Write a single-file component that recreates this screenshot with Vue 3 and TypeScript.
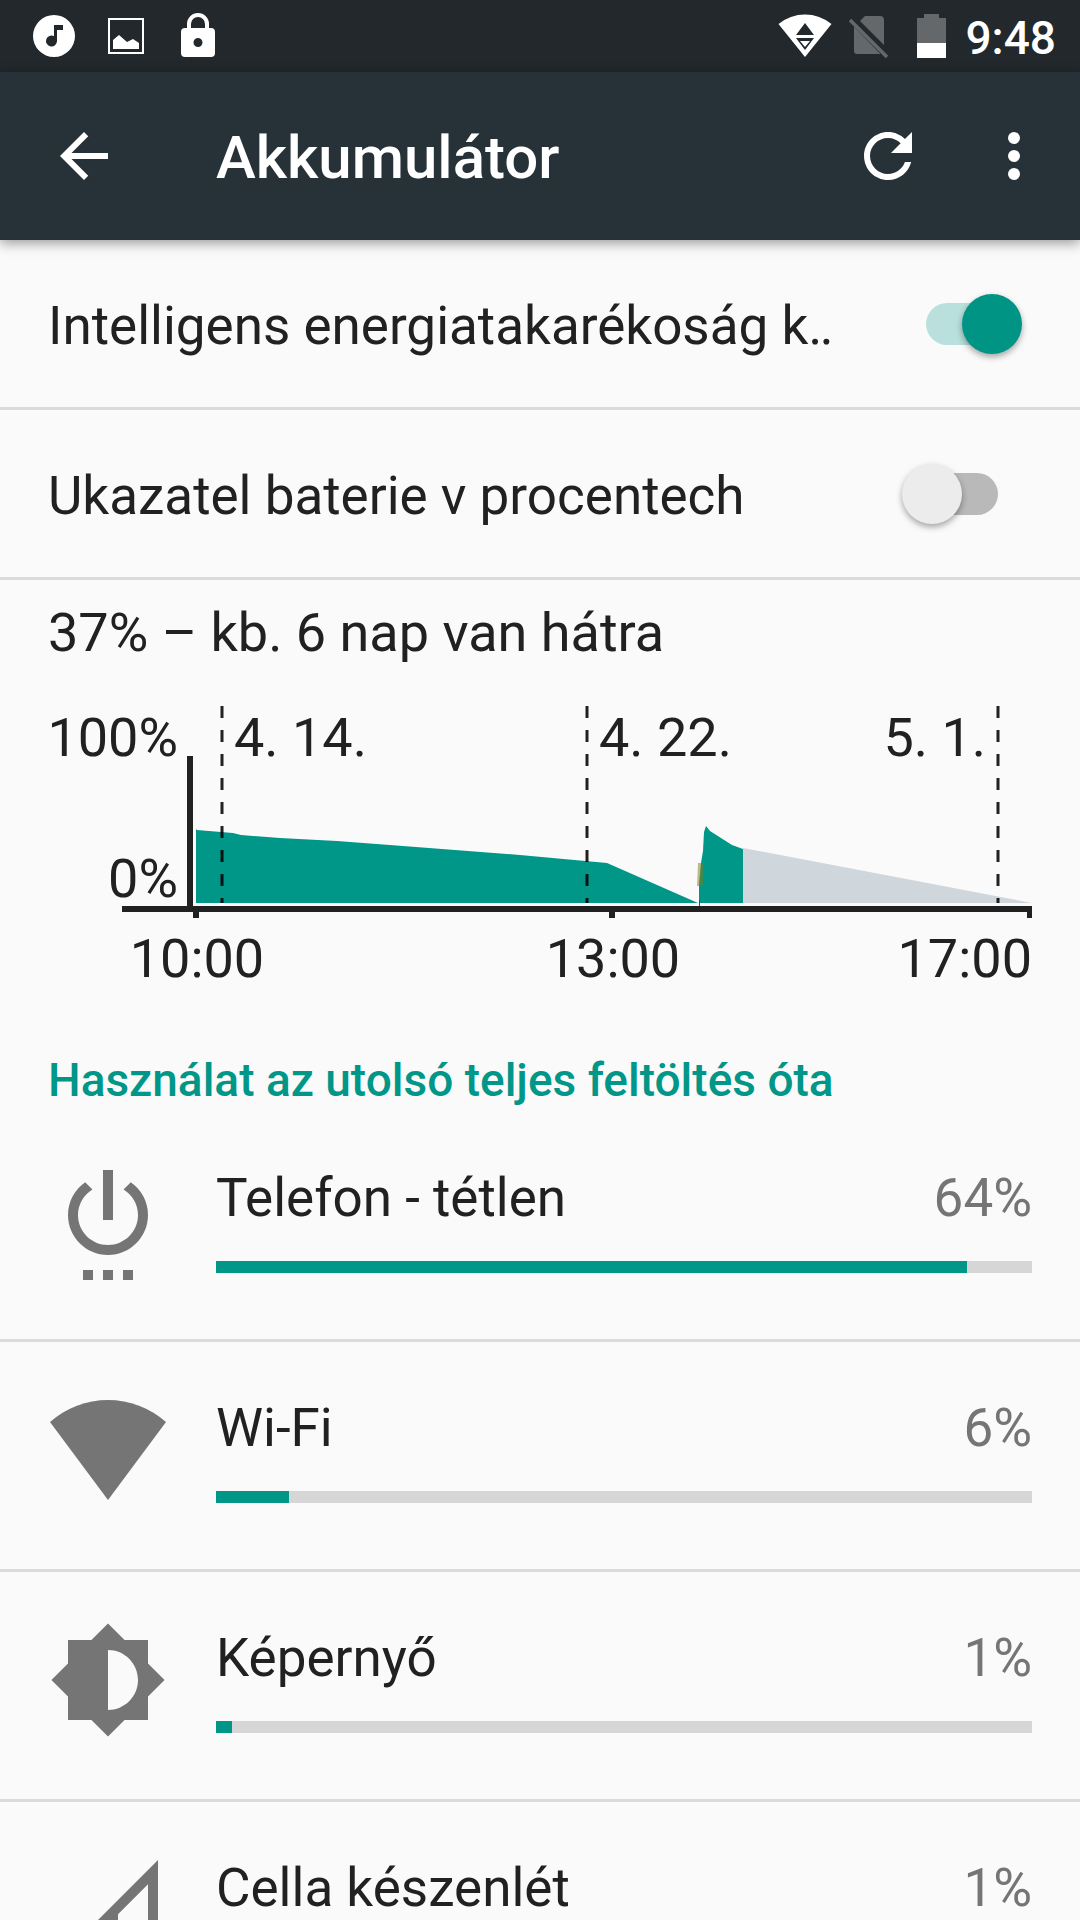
<script setup lang="ts">
import { ref } from 'vue'

interface Usage {
  id: string
  name: string
  percent: string
  fill: number
  icon: string
}

const smartSaver = ref(true)
const showPercent = ref(false)

const usages: Usage[] = [
  {
    id: 'idle',
    name: 'Telefon - tétlen',
    percent: '64%',
    fill: 92,
    icon: 'M7 24h2v-2H7v2zm4 0h2v-2h-2v2zm2-22h-2v10h2V2zm3.56 2.44l-1.45 1.45C16.84 6.94 18 8.83 18 11c0 3.31-2.69 6-6 6s-6-2.69-6-6c0-2.17 1.16-4.06 2.88-5.12L7.44 4.44C5.36 5.88 4 8.28 4 11c0 4.42 3.58 8 8 8s8-3.58 8-8c0-2.72-1.36-5.12-3.44-6.56zM15 24h2v-2h-2v2z',
  },
  {
    id: 'wifi',
    name: 'Wi-Fi',
    percent: '6%',
    fill: 9,
    icon: 'M12 22L.4 6.4A17.5 17.5 0 0 1 23.6 6.4z',
  },
  {
    id: 'screen',
    name: 'Képernyő',
    percent: '1%',
    fill: 2,
    icon: 'M20 15.31L23.31 12 20 8.69V4h-4.69L12 .69 8.69 4H4v4.69L.69 12 4 15.31V20h4.69L12 23.31 15.31 20H20v-4.69zM12 18V6c3.31 0 6 2.69 6 6s-2.69 6-6 6z',
  },
  {
    id: 'cell',
    name: 'Cella készenlét',
    percent: '1%',
    fill: 2,
    icon: 'M2 22h20V2zM20 20h-6v-7.17l6-6z',
  },
]

const dayLines = [222, 587, 998]
</script>

<template>
  <div class="screen">
    <div class="status">
      <div class="notifications">
        <svg class="note" viewBox="0 0 72 72" aria-hidden="true">
          <path
            fill="#fff"
            fill-rule="evenodd"
            d="M36 15a21 21 0 1 0 0 42 21 21 0 0 0 0-42zM36 25h9v5h-6v11a5.500 5.500 0 1 1-3-4.900z"
          />
        </svg>
        <svg class="note" viewBox="0 0 72 72" aria-hidden="true">
          <rect x="19" y="19" width="34" height="34" fill="none" stroke="#fff" stroke-width="2" />
          <path fill="#fff" d="M23 49v-9l6-5 8 7 6-3 6 4v6z" />
        </svg>
        <svg class="note" viewBox="0 0 72 72" aria-hidden="true">
          <path
            fill="#fff"
            fill-rule="evenodd"
            d="M25 28v-4a11 11 0 0 1 22 0v4h2a4 4 0 0 1 4 4v21a4 4 0 0 1-4 4H23a4 4 0 0 1-4-4V32a4 4 0 0 1 4-4zM29 28h14v-4a7 7 0 0 0-14 0zM36 38a4.500 4.500 0 1 0 0 9 4.500 4.500 0 0 0 0-9z"
          />
        </svg>
      </div>
      <div class="system">
        <svg class="sys" viewBox="0 0 63 72" aria-hidden="true">
          <path fill="#fff" d="M31 57L4.500 24a42 42 0 0 1 53 0z" />
          <path fill="#23282c" d="M31 23l9 12H22zM22 38h18l-9 12z" />
          <path fill="#fff" d="M26 41h10l-5 6z" />
        </svg>
        <svg class="sys" viewBox="0 0 63 72" aria-hidden="true">
          <path
            fill="#64686b"
            d="M24 20l4-4h15a4 4 0 0 1 4 4v25L23 21zM17 26.500L43.500 54H20a3 3 0 0 1-3-3z"
          />
          <path d="M13 20l37 37" stroke="#64686b" stroke-width="3.500" />
        </svg>
        <svg class="sys" viewBox="0 0 63 72" aria-hidden="true">
          <path fill="#64686b" d="M17 18h7v-4h15v4h7v25H17z" />
          <path fill="#fff" d="M17 43h29v15H17z" />
        </svg>
        <time class="clock">9:48</time>
      </div>
    </div>

    <header class="bar">
      <button class="action" type="button" aria-label="Vissza">
        <svg viewBox="0 0 24 24" aria-hidden="true">
          <path fill="#fff" d="M20 11H7.830l5.590-5.590L12 4l-8 8 8 8 1.410-1.410L7.830 13H20v-2z" />
        </svg>
      </button>
      <h1 class="title">Akkumulátor</h1>
      <button class="action" type="button" aria-label="Frissítés">
        <svg viewBox="0 0 24 24" aria-hidden="true">
          <path
            fill="#fff"
            d="M17.650 6.350C16.200 4.900 14.210 4 12 4c-4.420 0-7.990 3.580-7.990 8s3.570 8 7.990 8c3.730 0 6.840-2.550 7.730-6h-2.080c-.82 2.330-3.040 4-5.650 4-3.310 0-6-2.690-6-6s2.690-6 6-6c1.660 0 3.140.69 4.220 1.780L13 11h7V4l-2.350 2.350z"
          />
        </svg>
      </button>
      <button class="action more" type="button" aria-label="További lehetőségek">
        <svg viewBox="0 0 24 24" fill="#fff" aria-hidden="true">
          <circle cx="12" cy="6" r="2" />
          <circle cx="12" cy="12" r="2" />
          <circle cx="12" cy="18" r="2" />
        </svg>
      </button>
    </header>

    <main class="content">
      <div class="setting">
        <label class="label" for="smart">Intelligens energiatakarékoság k‥</label>
        <input id="smart" v-model="smartSaver" class="switch" type="checkbox" role="switch" />
      </div>
      <div class="setting inset">
        <label class="label" for="percent">Ukazatel baterie v procentech</label>
        <input id="percent" v-model="showPercent" class="switch" type="checkbox" role="switch" />
      </div>

      <section class="history">
        <p class="summary">37% – kb. 6 nap van hátra</p>
        <svg class="chart" viewBox="48 700 984 290" role="img" aria-label="Akkumulátor töltöttsége">
          <path
            class="level"
            d="M196 903V829l1 1 36 3 8 2 39 3 57 3 79 6 104 8 87 8 91 40z"
          />
          <path class="level" d="M699 903v-18l2-22 2-12 1-19 2-6 4 5 22 14 11 4v54z" />
          <path class="forecast" d="M743 903v-55l289 55z" />
          <path class="charging" d="M698 863h6l-1 23h-6z" />
          <path class="empty" d="M699 900h1v6h-1z" />
          <line v-for="x in dayLines" :key="x" class="day" :x1="x" :x2="x" y1="706" y2="903" />
          <path
            class="axis"
            d="M187 756h6v150h839v12h-5v-6H615v6h-6v-6H199v6h-6v-6H122v-6h65z"
          />
          <g class="tick">
            <text x="178" y="756" text-anchor="end">100%</text>
            <text x="178" y="897" text-anchor="end">0%</text>
            <text x="234" y="756">4. 14.</text>
            <text x="599" y="756">4. 22.</text>
            <text x="986" y="756" text-anchor="end">5. 1.</text>
            <text x="197" y="977" text-anchor="middle">10:00</text>
            <text x="613" y="977" text-anchor="middle">13:00</text>
            <text x="1032" y="977" text-anchor="end">17:00</text>
          </g>
        </svg>
      </section>

      <section>
        <h2 class="heading">Használat az utolsó teljes feltöltés óta</h2>
        <ul class="list">
          <li v-for="usage in usages" :key="usage.id" class="usage">
            <svg class="icon" viewBox="0 0 24 24" aria-hidden="true">
              <path :d="usage.icon" fill-rule="evenodd" />
            </svg>
            <div class="info">
              <div class="line">
                <span>{{ usage.name }}</span>
                <span class="amount">{{ usage.percent }}</span>
              </div>
              <div class="track">
                <div class="fill" :style="{ width: usage.fill + '%' }"></div>
              </div>
            </div>
          </li>
        </ul>
      </section>
    </main>
  </div>
</template>

<style>
body {
  margin: 0;
  background: #fafafa;
}
</style>

<style scoped>
.screen {
  display: flex;
  flex-direction: column;
  height: 100vh;
  overflow: hidden;
  background: #fafafa;
  color: #212121;
  font-family: Roboto, "Noto Sans", sans-serif;
  font-size: 53px;
  line-height: 64px;
}

.status {
  display: flex;
  flex: none;
  justify-content: space-between;
  height: 72px;
  padding: 0 24px 0 18px;
  background: #23282c;
  color: #fff;
}

.notifications,
.system {
  display: flex;
  align-items: center;
}

.note {
  width: 72px;
  height: 72px;
}

.sys {
  width: 63px;
  height: 72px;
}

.clock {
  margin-left: 2px;
  padding-top: 4px;
  font-size: 46px;
  font-weight: 500;
  line-height: 68px;
}

.bar {
  position: relative;
  display: flex;
  flex: none;
  align-items: center;
  height: 168px;
  padding: 0 30px 0 48px;
  background: #273238;
  box-shadow: 0 3px 12px rgba(0, 0, 0, 0.4);
  color: #fff;
}

.action {
  width: 72px;
  height: 72px;
  padding: 0;
  border: 0;
  background: none;
}

.action svg {
  display: block;
}

.more {
  margin-left: 54px;
}

.title {
  flex: 1;
  margin: 0 0 0 96px;
  padding-top: 4px;
  font-size: 60px;
  font-weight: 500;
}

.content {
  flex: 1;
  min-height: 0;
  overflow: hidden;
}

.setting {
  display: flex;
  align-items: center;
  justify-content: space-between;
  height: 167px;
  padding: 0 58px 0 48px;
  border-bottom: 3px solid #dbdbdb;
}

.inset {
  padding-right: 82px;
}

.label {
  padding-top: 4px;
  white-space: nowrap;
}

.switch {
  display: grid;
  flex: none;
  align-items: center;
  width: 96px;
  height: 60px;
  margin: 0;
  appearance: none;
}

.switch::before,
.switch::after {
  grid-area: 1 / 1;
  content: "";
}

.switch::before {
  width: 84px;
  height: 42px;
  border-radius: 21px;
  background: #b9b9b9;
  justify-self: end;
}

.switch::after {
  width: 60px;
  height: 60px;
  border-radius: 50%;
  background: #ececec;
  box-shadow: 0 3px 6px rgba(0, 0, 0, 0.35);
}

.switch:checked::before {
  background: #b9e0dc;
  justify-self: start;
}

.switch:checked::after {
  background: #009485;
  justify-self: end;
}

.history {
  padding: 21px 48px 0;
}

.summary {
  margin: 0 0 35px;
  font-size: 54px;
}

.chart {
  display: block;
  width: 100%;
}

.level {
  fill: #009688;
}

.forecast {
  fill: #cfd7dd;
}

.charging {
  fill: #827717;
  fill-opacity: 0.5;
}

.empty {
  fill: #a02020;
}

.day {
  stroke: #000;
  stroke-dasharray: 12 12;
  stroke-opacity: 0.87;
  stroke-width: 3;
}

.axis {
  fill: #212121;
}

.tick {
  fill: #212121;
  font-size: 54px;
}

.heading {
  margin: 0;
  padding: 58px 48px 0;
  color: #009688;
  font-size: 46px;
  font-weight: 500;
  line-height: 64px;
}

.list {
  margin: 0;
  padding: 0;
  list-style: none;
}

.usage {
  display: flex;
  gap: 48px;
  height: 179px;
  padding: 48px 48px 0;
  border-bottom: 3px solid #dbdbdb;
}

.icon {
  flex: none;
  width: 120px;
  height: 120px;
  fill: #757575;
}

.info {
  flex: 1;
  padding-top: 6px;
}

.line {
  display: flex;
  justify-content: space-between;
}

.amount {
  color: #757575;
}

.track {
  height: 12px;
  margin-top: 31px;
  background: #d6d6d6;
}

.fill {
  height: 12px;
  background: #009688;
}
</style>
